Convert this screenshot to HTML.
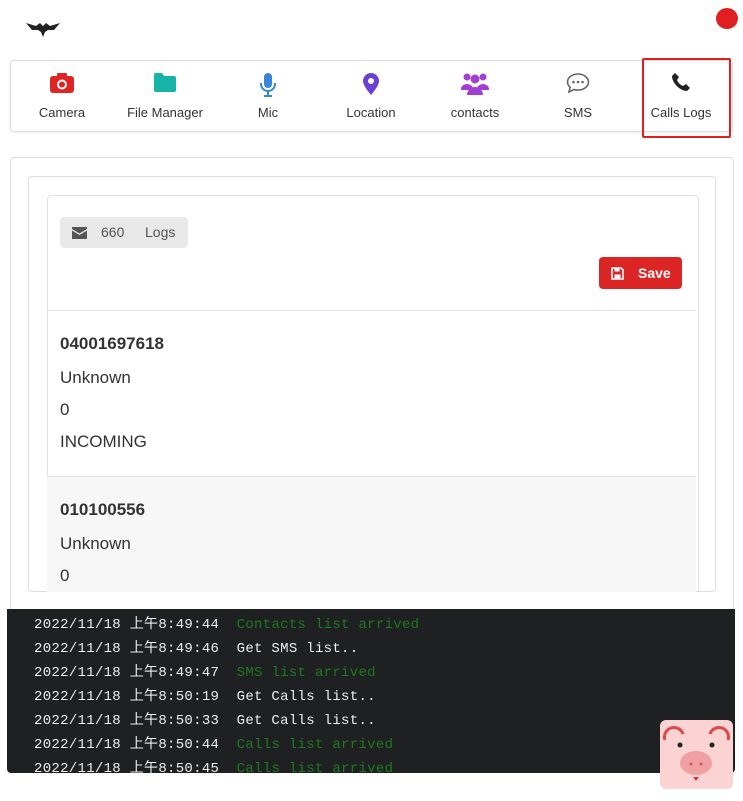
<!DOCTYPE html>
<html><head><meta charset="utf-8"><style>
*{box-sizing:border-box;margin:0;padding:0}
body{width:743px;height:801px;background:#fff;font-family:"Liberation Sans","Noto Sans CJK SC",sans-serif;position:relative;overflow:hidden;color:#222}
.abs{position:absolute}
.nav{left:10px;top:60px;width:723px;height:72px;border:1px solid #ddd;border-radius:4px;box-shadow:0 1px 3px rgba(0,0,0,.08)}
.item{position:absolute;top:0;width:100px;margin-left:-50px;text-align:center}
.item svg{position:absolute;left:50%;top:12px;transform:translateX(-50%)}
.item span{position:absolute;top:44px;left:0;width:100%;font-size:13px;color:#333}
.row{position:absolute;left:47px;width:649px;padding-left:13px}
.row div{position:absolute;left:13px;font-size:17px;color:#333;white-space:nowrap}
.term{left:7px;top:609px;width:728px;height:164px;background:#1f2022;border-radius:0 0 4px 4px;overflow:hidden;font-family:"Liberation Mono","Noto Sans CJK SC",monospace;font-size:14px;letter-spacing:0.3px}
.term p{position:absolute;left:27px;white-space:pre;color:#eee}
.g{color:#1e7a1e}
</style></head><body>
<svg class="abs" style="left:26px;top:20px" width="34" height="17" viewBox="0 0 34 17"><path d="M0 3 L10 6 L14 3 L17 6 L20 3 L24 6 L34 3 L28 10 L22 10 L19 12 L17 17 L15 12 L12 10 L6 10Z" fill="#222"/></svg>
<div class="abs" style="left:716px;top:8px;width:22px;height:21px;border-radius:50%;background:#e02020"></div>
<div class="abs nav">
<div class="item" style="left:51px"><svg width="24" height="20" viewBox="0 0 24 20"><rect x="0" y="3" width="24" height="17" rx="3" fill="#e02424"/><rect x="7" y="0" width="10" height="5" rx="1" fill="#e02424"/><circle cx="12" cy="11.5" r="5" fill="#fff"/><circle cx="12" cy="11.5" r="3" fill="#e02424"/></svg><span>Camera</span></div>
<div class="item" style="left:154px"><svg width="22" height="19" viewBox="0 0 22 19"><path d="M0 2a2 2 0 0 1 2-2h6l2 3h10a2 2 0 0 1 2 2v12a2 2 0 0 1-2 2H2a2 2 0 0 1-2-2Z" fill="#17b3a6"/></svg><span>File Manager</span></div>
<div class="item" style="left:257px"><svg width="16" height="24" viewBox="0 0 16 24"><rect x="4" y="0" width="8" height="15" rx="4" fill="#3a86d6"/><path d="M1 10v1a7 7 0 0 0 14 0v-1M8 18v4M4 23h8" stroke="#3a86d6" stroke-width="2" fill="none"/></svg><span>Mic</span></div>
<div class="item" style="left:360px"><svg width="16" height="22" viewBox="0 0 16 22"><path d="M8 0a8 8 0 0 1 8 8c0 5-8 14-8 14S0 13 0 8a8 8 0 0 1 8-8Z" fill="#6a3fd1"/><circle cx="8" cy="8" r="3" fill="#fff"/></svg><span>Location</span></div>
<div class="item" style="left:464px"><svg width="28" height="22" viewBox="0 0 28 22"><g fill="#a23fd1"><circle cx="6" cy="4" r="3.5"/><circle cx="22" cy="4" r="3.5"/><circle cx="14" cy="6" r="4.5"/><path d="M0 16a6 5 0 0 1 12 0v1H0Z"/><path d="M16 16a6 5 0 0 1 12 0v1H16Z"/><path d="M6 22a8 8 0 0 1 16 0Z"/></g></svg><span>contacts</span></div>
<div class="item" style="left:567px"><svg width="24" height="20" viewBox="0 0 24 20"><path d="M12 1C6 1 1.5 4.8 1.5 9c0 2 1 3.8 2.6 5.2L3 19l5-2.5c1.2.4 2.6.6 4 .6 6 0 10.5-3.8 10.5-8S18 1 12 1Z" fill="none" stroke="#666" stroke-width="1.6"/><circle cx="7.5" cy="9" r="1.3" fill="#666"/><circle cx="12" cy="9" r="1.3" fill="#666"/><circle cx="16.5" cy="9" r="1.3" fill="#666"/></svg><span>SMS</span></div>
<div class="item" style="left:670px"><svg width="18" height="18" viewBox="0 0 18 18"><path d="M3 0l4 4-2 3c1 2.5 3.5 5 6 6l3-2 4 4-3 3C8 18 0 10 0 3Z" fill="#222"/></svg><span>Calls Logs</span></div>
</div>
<div class="abs" style="left:642px;top:58px;width:89px;height:80px;border:2px solid #e02020;border-radius:2px"></div>
<div class="abs" style="left:10px;top:157px;width:724px;height:460px;border:1px solid #ddd;border-radius:4px"></div>
<div class="abs" style="left:28px;top:176px;width:688px;height:416px;border:1px solid #ddd;border-radius:4px;overflow:hidden">
 <div class="abs" style="left:18px;top:18px;width:652px;height:420px;border:1px solid #e2e2e2;border-radius:4px"></div>
</div>
<div class="abs" style="left:60px;top:217px;width:128px;height:31px;background:#e8e8e8;border-radius:4px;font-size:14px;color:#555">
 <svg class="abs" style="left:12px;top:10px" width="15" height="12" viewBox="0 0 15 12"><path d="M0 0h15v2L7.5 6.5 0 2Z M0 3.5l7.5 4.5L15 3.5V12H0Z" fill="#555"/></svg>
 <span class="abs" style="left:41px;top:7px">660</span><span class="abs" style="left:85px;top:7px">Logs</span></div>
<div class="abs" style="left:599px;top:257px;width:83px;height:32px;background:#dc2626;border-radius:4px;color:#fff;font-weight:bold;font-size:14px">
 <svg class="abs" style="left:12px;top:10px" width="13" height="13" viewBox="0 0 13 13"><path d="M1 1h9l2 2v9H1Z" fill="none" stroke="#fff" stroke-width="1.6"/><rect x="3.5" y="1" width="5" height="3.5" fill="#fff"/><rect x="3.5" y="7.5" width="6" height="4" fill="#fff"/></svg>
 <span class="abs" style="left:39px;top:8px">Save</span></div>
<div class="abs" style="left:47px;top:310px;width:649px;height:1px;background:#e2e2e2"></div>
<div class="row" style="top:311px;height:165px">
 <div style="top:23px;font-weight:bold">04001697618</div><div style="top:57px">Unknown</div><div style="top:89px">0</div><div style="top:121px">INCOMING</div></div>
<div class="abs" style="left:47px;top:476px;width:649px;height:1px;background:#e2e2e2"></div>
<div class="row" style="top:477px;height:115px;background:#f7f7f7;overflow:hidden">
 <div style="top:23px;font-weight:bold">010100556</div><div style="top:57px">Unknown</div><div style="top:89px">0</div></div>
<div class="abs term">
<p style="top:4px">2022/11/18 上午8:49:44  <span class="g">Contacts list arrived</span></p>
<p style="top:28px">2022/11/18 上午8:49:46  Get SMS list..</p>
<p style="top:52px">2022/11/18 上午8:49:47  <span class="g">SMS list arrived</span></p>
<p style="top:76px">2022/11/18 上午8:50:19  Get Calls list..</p>
<p style="top:100px">2022/11/18 上午8:50:33  Get Calls list..</p>
<p style="top:124px">2022/11/18 上午8:50:44  <span class="g">Calls list arrived</span></p>
<p style="top:148px">2022/11/18 上午8:50:45  <span class="g">Calls list arrived</span></p>
</div>
<svg class="abs" style="left:660px;top:720px" width="73" height="69" viewBox="0 0 73 69"><rect width="73" height="69" rx="6" fill="#fbd3d3"/><path d="M5 20a9 9 0 0 1 18-6M68 20a9 9 0 0 0-18-6" stroke="#e04848" stroke-width="3" fill="none"/><circle cx="20" cy="25" r="2.5" fill="#222"/><circle cx="52" cy="25" r="2.5" fill="#222"/><ellipse cx="36" cy="43" rx="16" ry="12" fill="#f0a0a3"/><circle cx="31" cy="44" r="1.5" fill="#c55"/><circle cx="41" cy="44" r="1.5" fill="#c55"/><path d="M33 57h6l-3 4Z" fill="#d33"/></svg>
</body></html>
